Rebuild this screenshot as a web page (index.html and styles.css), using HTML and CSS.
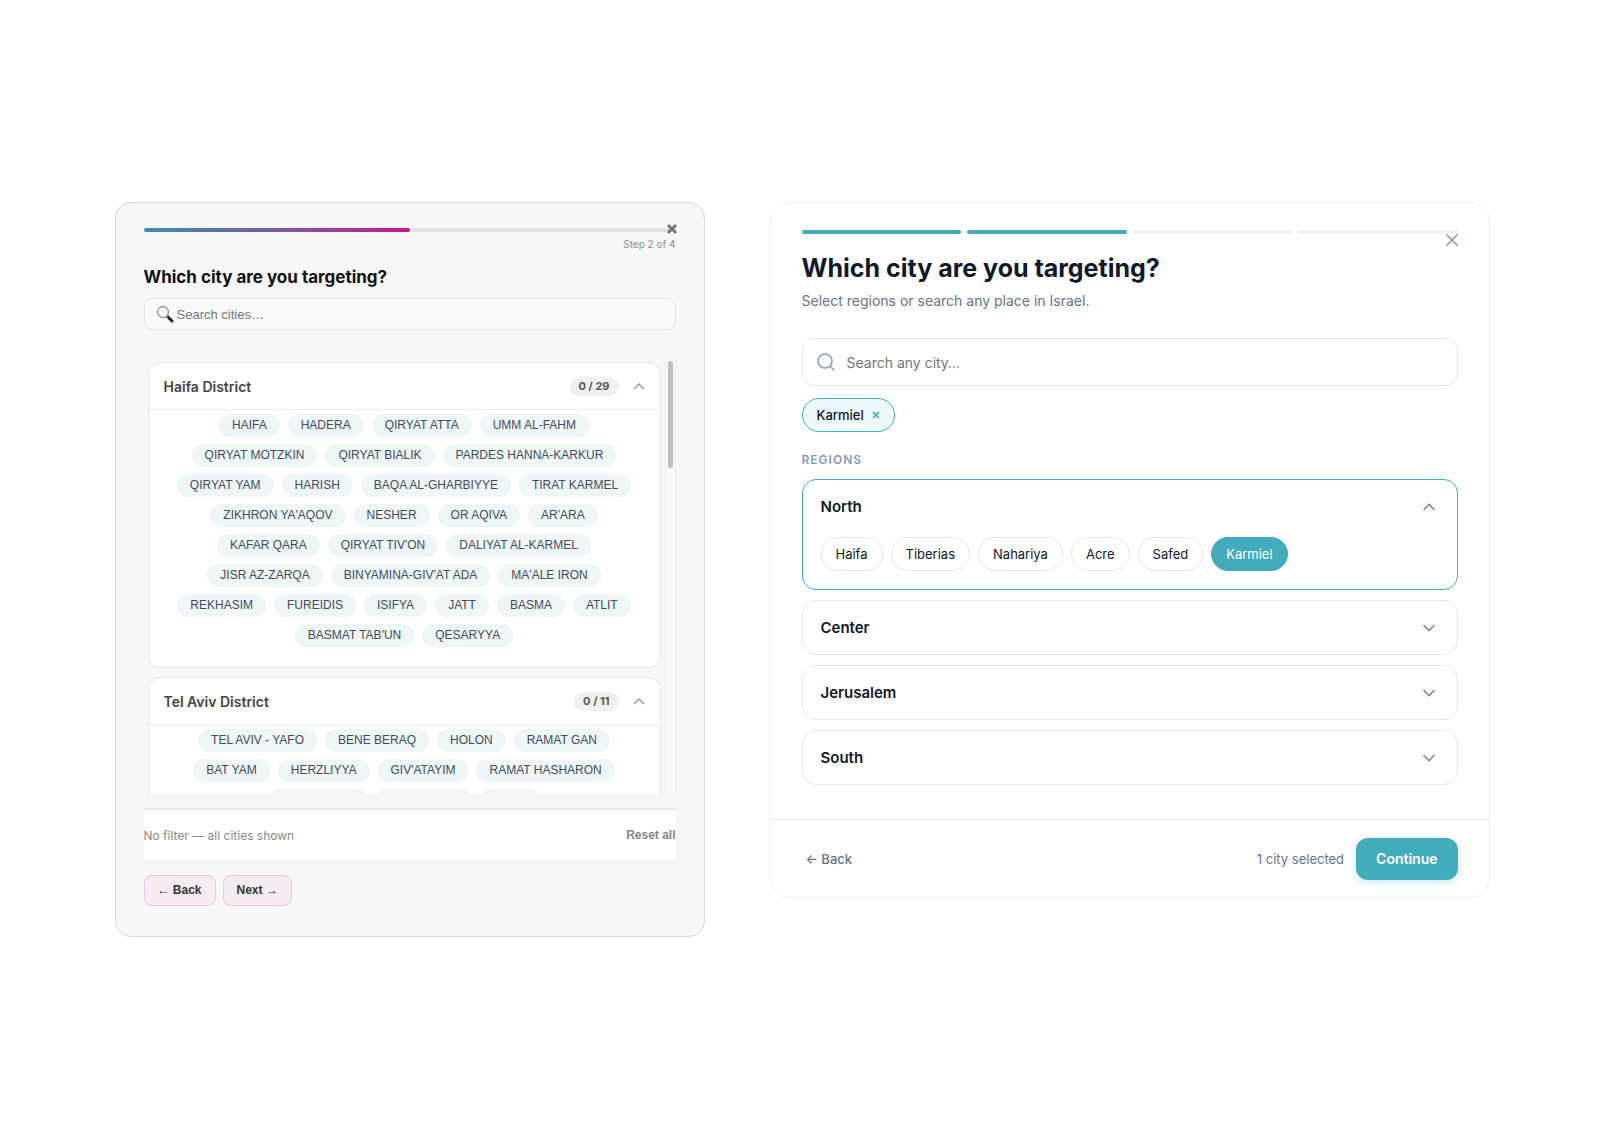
FILE: index.html
```html
<!DOCTYPE html>
<html lang="en">
<head>
    <meta charset="UTF-8">
    <meta name="viewport" content="width=device-width, initial-scale=1.0">
    <title>City targeting</title>
    <link rel="stylesheet" href="styles.css">
</head>
<body>
    <main class="page">
        <section class="old-card">
            <button class="old-close" type="button" aria-label="Close">
                <svg width="12" height="12" viewBox="0 0 12 12"><path d="M2 2l8 8M10 2l-8 8" stroke="#777" stroke-width="3"/></svg>
            </button>
            <div class="old-progress"><div class="old-progress-fill" style="width: 50%"></div></div>
            <p class="old-step">Step 2 of 4</p>
            <h2 class="old-title">Which city are you targeting?</h2>

            <label class="old-search">
                <svg width="18" height="18" viewBox="0 0 18 18" fill="none">
                    <path d="M10.5 10.5l5.5 5.5" stroke="#222" stroke-width="3" stroke-linecap="round"/>
                    <path d="M10 10l2 2" stroke="#777" stroke-width="2"/>
                    <circle cx="7" cy="7" r="5.5" fill="#eef3f6" stroke="#8d959b" stroke-width="1.3"/>
                    <path d="M4 6.5a3.2 3.2 0 0 1 2.8-2.7" stroke="#fff" stroke-width="1.2"/>
                </svg>
                <input type="text" placeholder="Search cities…" aria-label="Search cities">
            </label>

            <div class="old-scroll">
                <div class="districts">
                    <div class="district">
                        <button class="district-head" type="button" aria-expanded="true">
                            <span class="district-name">Haifa District</span>
                            <span class="count">0 / 29</span>
                            <svg width="12" height="8" viewBox="0 0 12 8" fill="none"><path d="M1 7l5-5 5 5" stroke="#999" stroke-width="1.5"/></svg>
                        </button>
                        <div class="cities">
                            <button class="city" type="button">HAIFA</button>
                            <button class="city" type="button">HADERA</button>
                            <button class="city" type="button">QIRYAT ATTA</button>
                            <button class="city" type="button">UMM AL-FAHM</button>
                            <button class="city" type="button">QIRYAT MOTZKIN</button>
                            <button class="city" type="button">QIRYAT BIALIK</button>
                            <button class="city" type="button">PARDES HANNA-KARKUR</button>
                            <button class="city" type="button">QIRYAT YAM</button>
                            <button class="city" type="button">HARISH</button>
                            <button class="city" type="button">BAQA AL-GHARBIYYE</button>
                            <button class="city" type="button">TIRAT KARMEL</button>
                            <button class="city" type="button">ZIKHRON YA'AQOV</button>
                            <button class="city" type="button">NESHER</button>
                            <button class="city" type="button">OR AQIVA</button>
                            <button class="city" type="button">AR'ARA</button>
                            <button class="city" type="button">KAFAR QARA</button>
                            <button class="city" type="button">QIRYAT TIV'ON</button>
                            <button class="city" type="button">DALIYAT AL-KARMEL</button>
                            <button class="city" type="button">JISR AZ-ZARQA</button>
                            <button class="city" type="button">BINYAMINA-GIV'AT ADA</button>
                            <button class="city" type="button">MA'ALE IRON</button>
                            <button class="city" type="button">REKHASIM</button>
                            <button class="city" type="button">FUREIDIS</button>
                            <button class="city" type="button">ISIFYA</button>
                            <button class="city" type="button">JATT</button>
                            <button class="city" type="button">BASMA</button>
                            <button class="city" type="button">ATLIT</button>
                            <button class="city" type="button">BASMAT TAB'UN</button>
                            <button class="city" type="button">QESARYYA</button>
                        </div>
                    </div>
                    <div class="district">
                        <button class="district-head" type="button" aria-expanded="true">
                            <span class="district-name">Tel Aviv District</span>
                            <span class="count">0 / 11</span>
                            <svg width="12" height="8" viewBox="0 0 12 8" fill="none"><path d="M1 7l5-5 5 5" stroke="#999" stroke-width="1.5"/></svg>
                        </button>
                        <div class="cities">
                            <button class="city" type="button">TEL AVIV - YAFO</button>
                            <button class="city" type="button">BENE BERAQ</button>
                            <button class="city" type="button">HOLON</button>
                            <button class="city" type="button">RAMAT GAN</button>
                            <button class="city" type="button">BAT YAM</button>
                            <button class="city" type="button">HERZLIYYA</button>
                            <button class="city" type="button">GIV'ATAYIM</button>
                            <button class="city" type="button">RAMAT HASHARON</button>
                            <button class="city" type="button">QIRYAT ONO</button>
                            <button class="city" type="button">OR YEHUDA</button>
                            <button class="city" type="button">AZOR</button>
                        </div>
                    </div>
                </div>
                <div class="scroll-track"><div class="scroll-thumb"></div></div>
            </div>

            <div class="old-summary">
                <span>No filter — all cities shown</span>
                <button class="reset" type="button">Reset all</button>
            </div>
            <div class="old-actions">
                <button class="old-btn" type="button">← Back</button>
                <button class="old-btn" type="button">Next →</button>
            </div>
        </section>

        <section class="new-card">
            <button class="new-close" type="button" aria-label="Close">
                <svg width="14" height="14" viewBox="0 0 14 14"><path d="M1.500 1.500l11 11M12.500 1.500l-11 11" stroke="#8a9ab3" stroke-width="1.700"/></svg>
            </button>
            <div class="new-body">
                <div class="steps">
                    <span class="step done"></span>
                    <span class="step done"></span>
                    <span class="step"></span>
                    <span class="step"></span>
                </div>
                <h2 class="new-title">Which city are you targeting?</h2>
                <p class="new-sub">Select regions or search any place in Israel.</p>

                <label class="new-search">
                    <svg width="18" height="18" viewBox="0 0 18 18" fill="none" stroke="#8a9ab3" stroke-width="1.600" stroke-linecap="round">
                        <circle cx="8" cy="8" r="7"/>
                        <path d="M13.200 13.200l3.600 3.600"/>
                    </svg>
                    <input type="text" placeholder="Search any city…" aria-label="Search any city">
                </label>

                <button class="pill picked" type="button">Karmiel
                    <svg width="8" height="8" viewBox="0 0 8 8"><path d="M1 1l6 6M7 1l-6 6" stroke="#42abbc" stroke-width="1.700"/></svg>
                </button>

                <h3 class="regions-label">Regions</h3>
                <div class="regions">
                    <div class="region open">
                        <button class="region-head" type="button" aria-expanded="true">North
                            <svg width="12" height="8" viewBox="0 0 12 8" fill="none"><path d="M.5 7L6 1.500 11.500 7" stroke="#8090ae" stroke-width="1.700"/></svg>
                        </button>
                        <div class="pills">
                            <button class="pill" type="button">Haifa</button>
                            <button class="pill" type="button">Tiberias</button>
                            <button class="pill" type="button">Nahariya</button>
                            <button class="pill" type="button">Acre</button>
                            <button class="pill" type="button">Safed</button>
                            <button class="pill active" type="button">Karmiel</button>
                        </div>
                    </div>
                    <div class="region">
                        <button class="region-head" type="button" aria-expanded="false">Center
                            <svg width="12" height="8" viewBox="0 0 12 8" fill="none"><path d="M.5 1L6 6.500 11.500 1" stroke="#8090ae" stroke-width="1.700"/></svg>
                        </button>
                    </div>
                    <div class="region">
                        <button class="region-head" type="button" aria-expanded="false">Jerusalem
                            <svg width="12" height="8" viewBox="0 0 12 8" fill="none"><path d="M.5 1L6 6.500 11.500 1" stroke="#8090ae" stroke-width="1.700"/></svg>
                        </button>
                    </div>
                    <div class="region">
                        <button class="region-head" type="button" aria-expanded="false">South
                            <svg width="12" height="8" viewBox="0 0 12 8" fill="none"><path d="M.5 1L6 6.500 11.500 1" stroke="#8090ae" stroke-width="1.700"/></svg>
                        </button>
                    </div>
                </div>
            </div>
            <div class="new-footer">
                <button class="back" type="button">← Back</button>
                <span class="selected-count">1 city selected</span>
                <button class="continue" type="button">Continue</button>
            </div>
        </section>
    </main>
</body>
</html>
```

FILE: styles.css
```css
* {
    box-sizing: border-box;
}

body {
    margin: 0;
    background: #fff;
    font-family: Inter, sans-serif;
}

h2, h3, p {
    margin: 0;
}

button {
    margin: 0;
    padding: 0;
    border: none;
    background: none;
    font-family: inherit;
    cursor: pointer;
}

input {
    flex: 1;
    min-width: 0;
    padding: 0;
    border: none;
    outline: none;
    background: none;
}

svg {
    display: block;
    flex: none;
}

.page {
    display: flex;
    justify-content: center;
    align-items: flex-start;
    gap: 65px;
    padding: 202px 24px;
}

/* Current design */
.old-card {
    position: relative;
    flex: 0 1 590px;
    min-width: 0;
    padding: 25px 28px 30px;
    border: 1px solid #d9d9d9;
    border-radius: 16px;
    background: #f7f7f7;
}

.old-close {
    position: absolute;
    top: 20px;
    right: 26px;
}

.old-progress {
    height: 4px;
    border-radius: 2px;
    background: #e2e2e2;
}

.old-progress-fill {
    height: 100%;
    border-radius: 2px;
    background: linear-gradient(90deg, #3a8fa8, #7a5ca6 50%, #c11a8c);
}

.old-step {
    margin-top: 5px;
    font-size: 10px;
    line-height: 14px;
    text-align: right;
    color: #8c8c8c;
}

.old-title {
    margin-top: 14px;
    font-size: 17px;
    line-height: 24px;
    font-weight: 700;
    color: #111;
}

.old-search {
    display: flex;
    align-items: center;
    gap: 3px;
    height: 32px;
    margin-top: 9px;
    padding: 0 11px;
    border: 1px solid #e6e6e6;
    border-radius: 8px;
    background: #f9f9f9;
}

.old-search input {
    font: 13px "Liberation Sans", sans-serif;
}

.old-search input::placeholder {
    color: #757575;
}

.old-scroll {
    display: flex;
    gap: 4px;
    max-height: 435px;
    margin-top: 29px;
    overflow: hidden;
}

.districts {
    flex: 1;
    display: flex;
    flex-direction: column;
    gap: 9px;
    padding: 3px 0 0 4px;
}

.district {
    flex: none;
    border: 1px solid #e6e6e6;
    border-radius: 12px;
    background: #fff;
}

.district-head {
    display: flex;
    align-items: center;
    width: 100%;
    height: 47px;
    padding: 0 15px;
    border-bottom: 1px solid #ececec;
    text-align: left;
}

.district-name {
    flex: 1;
    font-size: 14px;
    font-weight: 600;
    color: #444;
}

.count {
    margin-right: 14px;
    padding: 2px 9px;
    border-radius: 10px;
    background: #f0f0f0;
    font-size: 11px;
    line-height: 15px;
    font-weight: 700;
    color: #555;
}

.cities {
    display: flex;
    flex-wrap: wrap;
    justify-content: center;
    gap: 7px 8px;
    padding: 4px 16px 20px;
}

.city {
    padding: 4px 13px;
    border-radius: 12px;
    background: #eff6f8;
    font: 12px/15px "Liberation Sans", sans-serif;
    color: #414c5b;
}

.scroll-track {
    width: 11px;
    padding: 2px;
    border: 1px solid #ececec;
    border-width: 0 1px;
    background: #fafafa;
}

.scroll-thumb {
    height: 107px;
    border-radius: 3px;
    background: #bdbdbd;
}

.old-summary {
    display: flex;
    justify-content: space-between;
    align-items: center;
    height: 52px;
    margin-top: 14px;
    border-top: 2px solid #e8e8e8;
    background: #fff;
    font-size: 12px;
    color: #8a8a8a;
}

.reset {
    font: 700 12px "Liberation Sans", sans-serif;
    color: #858585;
}

.old-actions {
    display: flex;
    gap: 7px;
    margin-top: 15px;
}

.old-btn {
    padding: 7px 13px;
    border: 1px solid #ecc6e4;
    border-radius: 8px;
    background: #f5ebf3;
    font: 700 12px/15px "Liberation Sans", sans-serif;
    color: #333;
}

/* New design */
.new-card {
    position: relative;
    flex: 0 1 720px;
    min-width: 0;
    border: 1px solid #f1f2f4;
    border-radius: 20px;
    background: #fff;
}

.new-close {
    position: absolute;
    top: 30px;
    right: 30px;
}

.new-body {
    padding: 27px 31px 34px;
}

.steps {
    display: flex;
    gap: 6px;
}

.step {
    flex: 1;
    height: 4px;
    border-radius: 2px;
    background: #eef2f6;
}

.step.done {
    background: #42abbc;
}

.new-title {
    margin-top: 18px;
    font-size: 25px;
    line-height: 32px;
    font-weight: 700;
    color: #0f172a;
}

.new-sub {
    margin-top: 7px;
    font-size: 14px;
    line-height: 20px;
    color: #64748b;
}

.new-search {
    display: flex;
    align-items: center;
    gap: 12px;
    height: 48px;
    margin-top: 27px;
    padding: 0 14px;
    border: 1px solid #e0e6ed;
    border-radius: 12px;
}

.new-search input {
    font: 14px Inter, sans-serif;
}

.new-search input::placeholder {
    color: #757575;
}

.pill {
    display: flex;
    align-items: center;
    gap: 8px;
    padding: 8px 14px;
    border: 1px solid #e2e6ed;
    border-radius: 17px;
    font-size: 13px;
    line-height: 16px;
    color: #0f172a;
}

.pill.active {
    border-color: #42abbc;
    background: #42abbc;
    color: #fff;
}

.pill.picked {
    margin-top: 12px;
    border-color: #42abbc;
    background: #eef8fb;
    font-weight: 500;
}

.regions-label {
    margin-top: 20px;
    font-size: 12px;
    line-height: 16px;
    font-weight: 600;
    letter-spacing: 1px;
    text-transform: uppercase;
    color: #8a9ab3;
}

.regions {
    display: flex;
    flex-direction: column;
    gap: 10px;
    margin-top: 11px;
}

.region {
    border: 1px solid #e2e8f0;
    border-radius: 14px;
}

.region.open {
    border-color: #42abbc;
}

.region-head {
    display: flex;
    justify-content: space-between;
    align-items: center;
    width: 100%;
    height: 53px;
    padding: 0 22px 0 18px;
    font-size: 15px;
    font-weight: 600;
    color: #0f172a;
}

.pills {
    display: flex;
    flex-wrap: wrap;
    gap: 8px;
    padding: 4px 18px 18px;
}

.new-footer {
    display: flex;
    align-items: center;
    gap: 12px;
    padding: 18px 31px 17px;
    border-top: 1px solid #e2e6ee;
}

.back {
    margin-right: auto;
    padding: 0 4px;
    font-size: 13px;
    font-weight: 500;
    color: #64748b;
}

.selected-count {
    font-size: 13px;
    color: #64748b;
}

.continue {
    padding: 11px 20px;
    border-radius: 12px;
    background: #42abbc;
    box-shadow: 0 2px 8px rgba(66, 171, 188, 0.3);
    font-size: 14px;
    line-height: 20px;
    font-weight: 600;
    color: #fff;
}
```
